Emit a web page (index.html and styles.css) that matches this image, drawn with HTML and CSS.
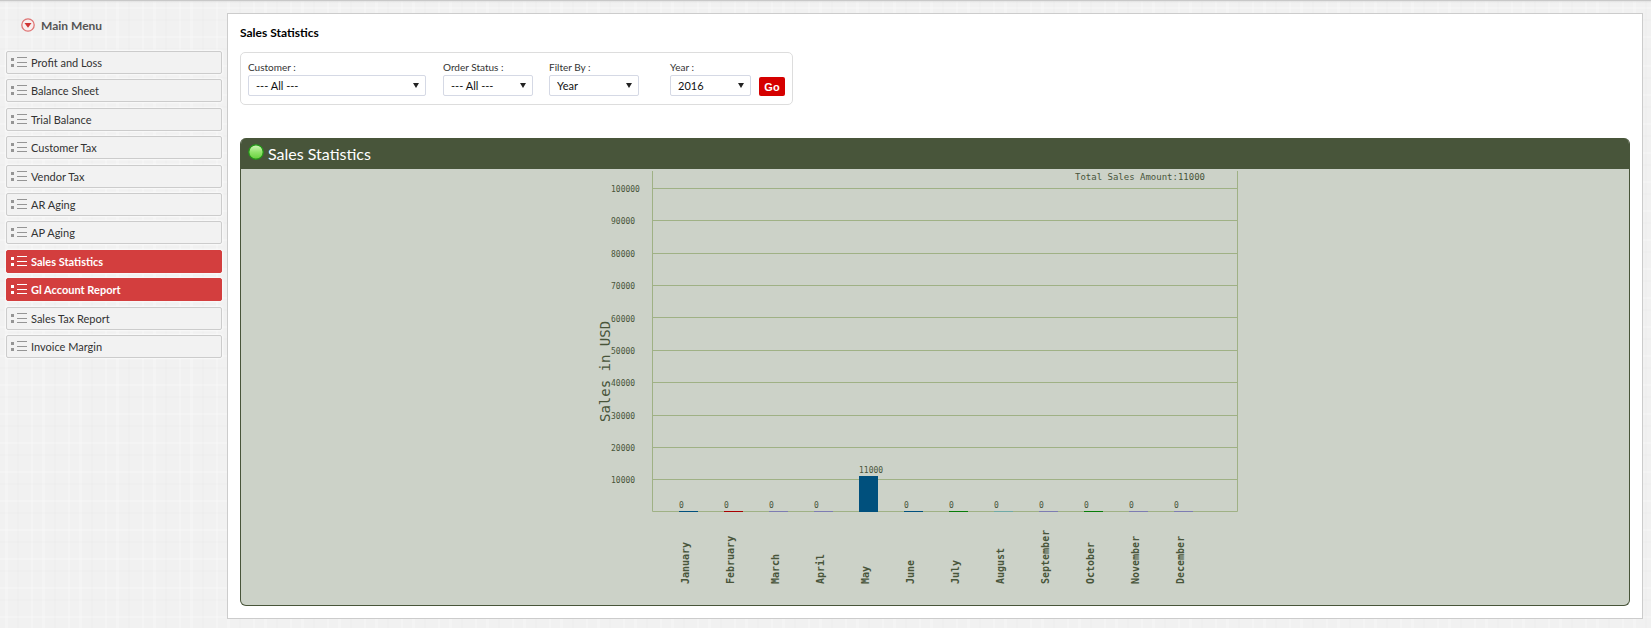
FILE: index.html
```html
<!DOCTYPE html>
<html lang="en">
<head>
<meta charset="utf-8">
<title>Sales Statistics</title>
<link rel="stylesheet" href="styles.css">
</head>
<body>
<svg class="sprites" aria-hidden="true">
  <symbol id="list" viewBox="0 0 16 11">
    <path fill="currentColor" d="M0 1h3v3H0zM0 7h3v3H0z"/>
    <path stroke="currentColor" d="M6 .5h10M6 5.5h10M6 9.5h10"/>
  </symbol>
</svg>
<div class="page">
  <nav class="sidebar">
    <h2 class="menu-title">
      <svg class="menu-icon" viewBox="0 0 14 14" aria-hidden="true"><circle cx="7" cy="7" r="6.2" fill="#f8eeee" stroke="#df7474" stroke-width="1.3"/><path d="M3.5 5h7L7 9.7z" fill="#cf3333"/></svg>
      Main Menu
    </h2>
    <ul class="menu">
      <li><a class="item" href="#"><svg class="list-icon"><use href="#list"/></svg>Profit and Loss</a></li>
      <li><a class="item" href="#"><svg class="list-icon"><use href="#list"/></svg>Balance Sheet</a></li>
      <li><a class="item" href="#"><svg class="list-icon"><use href="#list"/></svg>Trial Balance</a></li>
      <li><a class="item" href="#"><svg class="list-icon"><use href="#list"/></svg>Customer Tax</a></li>
      <li><a class="item" href="#"><svg class="list-icon"><use href="#list"/></svg>Vendor Tax</a></li>
      <li><a class="item" href="#"><svg class="list-icon"><use href="#list"/></svg>AR Aging</a></li>
      <li><a class="item" href="#"><svg class="list-icon"><use href="#list"/></svg>AP Aging</a></li>
      <li><a class="item active" href="#"><svg class="list-icon"><use href="#list"/></svg>Sales Statistics</a></li>
      <li><a class="item active" href="#"><svg class="list-icon"><use href="#list"/></svg>Gl Account Report</a></li>
      <li><a class="item" href="#"><svg class="list-icon"><use href="#list"/></svg>Sales Tax Report</a></li>
      <li><a class="item" href="#"><svg class="list-icon"><use href="#list"/></svg>Invoice Margin</a></li>
    </ul>
  </nav>
  <main class="content">
    <h1 class="title">Sales Statistics</h1>
    <form class="filters">
      <div class="field customer"><label for="customer">Customer :</label><span class="pick"><select id="customer"><option>--- All ---</option></select></span></div>
      <div class="field status"><label for="status">Order Status :</label><span class="pick"><select id="status"><option>--- All ---</option></select></span></div>
      <div class="field by"><label for="by">Filter By :</label><span class="pick"><select id="by"><option>Year</option></select></span></div>
      <div class="field year"><label for="year">Year :</label><span class="pick"><select id="year"><option>2016</option></select></span></div>
      <button class="go" type="button">Go</button>
    </form>
    <section class="panel">
      <h2 class="panel-head">
        <svg class="ball" viewBox="0 0 16 16" aria-hidden="true"><defs><linearGradient id="glow" x1="0" y1="0" x2="0" y2="1"><stop offset="0" stop-color="#d4f8bd"/><stop offset=".5" stop-color="#91e46b"/><stop offset="1" stop-color="#66cf3c"/></linearGradient></defs><circle cx="8" cy="8" r="7.2" fill="url(#glow)" stroke="#239a17" stroke-width="1.2"/></svg>
        Sales Statistics
      </h2>
      <svg class="chart" viewBox="0 0 700 436" role="img" aria-label="Sales in USD by month">
        <g class="grid">
          <path d="M67 19.5h585M67 51.5h585M67 84.5h585M67 116.5h585M67 148.5h585M67 181.5h585M67 213.5h585M67 246.5h585M67 278.5h585M67 310.5h585"/>
          <path d="M67.5 2v340.5h585V2"/>
        </g>
        <g class="small">
          <text x="26" y="23">100000</text><text x="26" y="55">90000</text><text x="26" y="88">80000</text><text x="26" y="120">70000</text><text x="26" y="153">60000</text><text x="26" y="185">50000</text><text x="26" y="217">40000</text><text x="26" y="250">30000</text><text x="26" y="282">20000</text><text x="26" y="314">10000</text>
        </g>
        <text class="total" x="490" y="11">Total Sales Amount:11000</text>
        <text class="axis" transform="translate(25 253) rotate(-90)">Sales in USD</text>
        <g>
          <path fill="#00507d" d="M94 342h19v1H94zM274 307h19v36h-19zM319 342h19v1h-19z"/>
          <path fill="#a80000" d="M139 342h19v1h-19z"/>
          <path fill="#7d7db2" d="M184 342h19v1h-19zM229 342h19v1h-19zM454 342h19v1h-19zM544 342h19v1h-19zM589 342h19v1h-19z"/>
          <path fill="#087c08" d="M364 342h19v1h-19zM499 342h19v1h-19z"/>
          <path fill="#70aaa6" d="M409 342h19v1h-19z"/>
        </g>
        <g class="small">
          <text x="94" y="339">0</text><text x="139" y="339">0</text><text x="184" y="339">0</text><text x="229" y="339">0</text><text x="274" y="304">11000</text><text x="319" y="339">0</text><text x="364" y="339">0</text><text x="409" y="339">0</text><text x="454" y="339">0</text><text x="499" y="339">0</text><text x="544" y="339">0</text><text x="589" y="339">0</text>
        </g>
        <g class="months">
          <text transform="translate(104 415) rotate(-90)">January</text>
          <text transform="translate(149 415) rotate(-90)">February</text>
          <text transform="translate(194 415) rotate(-90)">March</text>
          <text transform="translate(239 415) rotate(-90)">April</text>
          <text transform="translate(284 415) rotate(-90)">May</text>
          <text transform="translate(329 415) rotate(-90)">June</text>
          <text transform="translate(374 415) rotate(-90)">July</text>
          <text transform="translate(419 415) rotate(-90)">August</text>
          <text transform="translate(464 415) rotate(-90)">September</text>
          <text transform="translate(509 415) rotate(-90)">October</text>
          <text transform="translate(554 415) rotate(-90)">November</text>
          <text transform="translate(599 415) rotate(-90)">December</text>
        </g>
      </svg>
    </section>
  </main>
</div>
</body>
</html>
```
FILE: styles.css
```css
* { box-sizing: border-box; }
body {
  margin: 0;
  font-family: Lato, "Liberation Sans", sans-serif;
  font-size: 12px;
  color: #333;
  border-top: 1px solid #c8c8c8;
  background:
    linear-gradient(#dadada, transparent 3px) no-repeat,
    repeating-linear-gradient(90deg, transparent 0 5px, rgba(255,255,255,.2) 5px 8px, transparent 8px 17px, rgba(0,0,0,.008) 17px 19px, transparent 19px 31px, rgba(255,255,255,.2) 31px 33px, transparent 33px 37px),
    repeating-linear-gradient(transparent 0 7px, rgba(255,255,255,.2) 7px 9px, transparent 9px 19px, rgba(0,0,0,.008) 19px 21px, transparent 21px 29px),
    #f1f1f1;
}
.sprites { display: none; }
.page { display: flex; align-items: flex-start; gap: 5px; padding: 12px 8px 8px 6px; }
.sidebar { flex: none; width: 216px; }
.menu-title {
  display: flex;
  align-items: center;
  gap: 6px;
  margin: 0 0 14px;
  padding-left: 15px;
  height: 24px;
  font-size: 12px;
  color: #555;
}
.menu-icon { width: 14px; height: 14px; }
.menu {
  display: flex;
  flex-direction: column;
  justify-content: space-between;
  min-height: 307px;
  margin: 0;
  padding: 0;
  list-style: none;
}
.item {
  display: flex;
  align-items: center;
  gap: 4px;
  height: 23px;
  padding: 0 4px;
  border: 1px solid #ccc;
  border-radius: 2px;
  background: #f2f2f2;
  box-shadow: 0 0 2px 1px #fafafa;
  color: #333;
  font-size: 11px;
  text-decoration: none;
}
.list-icon { width: 16px; height: 11px; color: #959595; }
.item.active { background: #d33e3e; border-color: #d33e3e; color: #fff; font-weight: 700; }
.active .list-icon { color: #fff; }
.content {
  flex: 1;
  min-width: 0;
  padding: 12px;
  border: 1px solid #ccc;
  background: #fff;
}
.title { margin: 0 0 12px; font-size: 12px; line-height: 14px; color: #000; }
.filters {
  display: flex;
  align-items: flex-end;
  width: fit-content;
  height: 53px;
  padding: 8px 7px;
  border: 1px solid #ddd;
  border-radius: 5px;
}
.field { display: flex; flex-direction: column; font-size: 10px; line-height: 12px; gap: 2px; }
.customer { width: 178px; margin-right: 17px; }
.status, .by { width: 90px; }
.status { margin-right: 16px; }
.by { margin-right: 31px; }
.year { width: 81px; margin-right: 8px; }
.pick { position: relative; display: block; height: 21px; }
.pick::after {
  content: "";
  position: absolute;
  top: 8px;
  right: 7px;
  border: solid transparent;
  border-width: 5px 3px 0;
  border-top-color: #222;
  pointer-events: none;
}
select {
  appearance: none;
  width: 100%;
  height: 21px;
  padding: 0 7px;
  border: 1px solid #d5d9e5;
  border-radius: 2px;
  background: #fff;
  font: 11px Lato, sans-serif;
  color: #111;
}
.go {
  width: 26px;
  height: 19px;
  padding: 0;
  border: 0;
  border-radius: 2px;
  background: #d50000;
  color: #fff;
  font: bold 11px "Liberation Sans", sans-serif;
}
.panel {
  margin-top: 33px;
  border: 1px solid #48553a;
  border-top: 0;
  border-radius: 6px;
  background: #ccd2c8;
  overflow: hidden;
}
.panel-head {
  display: flex;
  align-items: center;
  gap: 4px;
  height: 31px;
  margin: 0;
  padding: 0 7px;
  background: #48553a;
  color: #fff;
  font-size: 16px;
  font-weight: 400;
}
.ball { width: 16px; height: 16px; margin-bottom: 3px; }
.chart { display: block; width: 700px; max-width: 100%; margin: 0 auto; font-family: "DejaVu Sans Mono", monospace; fill: #48553a; }
.grid { fill: none; stroke: #9fb185; }
.small { font-size: 8px; }
.total { font-size: 9px; }
.axis { font-size: 14px; }
.months { font-size: 10px; font-weight: 700; }
```
